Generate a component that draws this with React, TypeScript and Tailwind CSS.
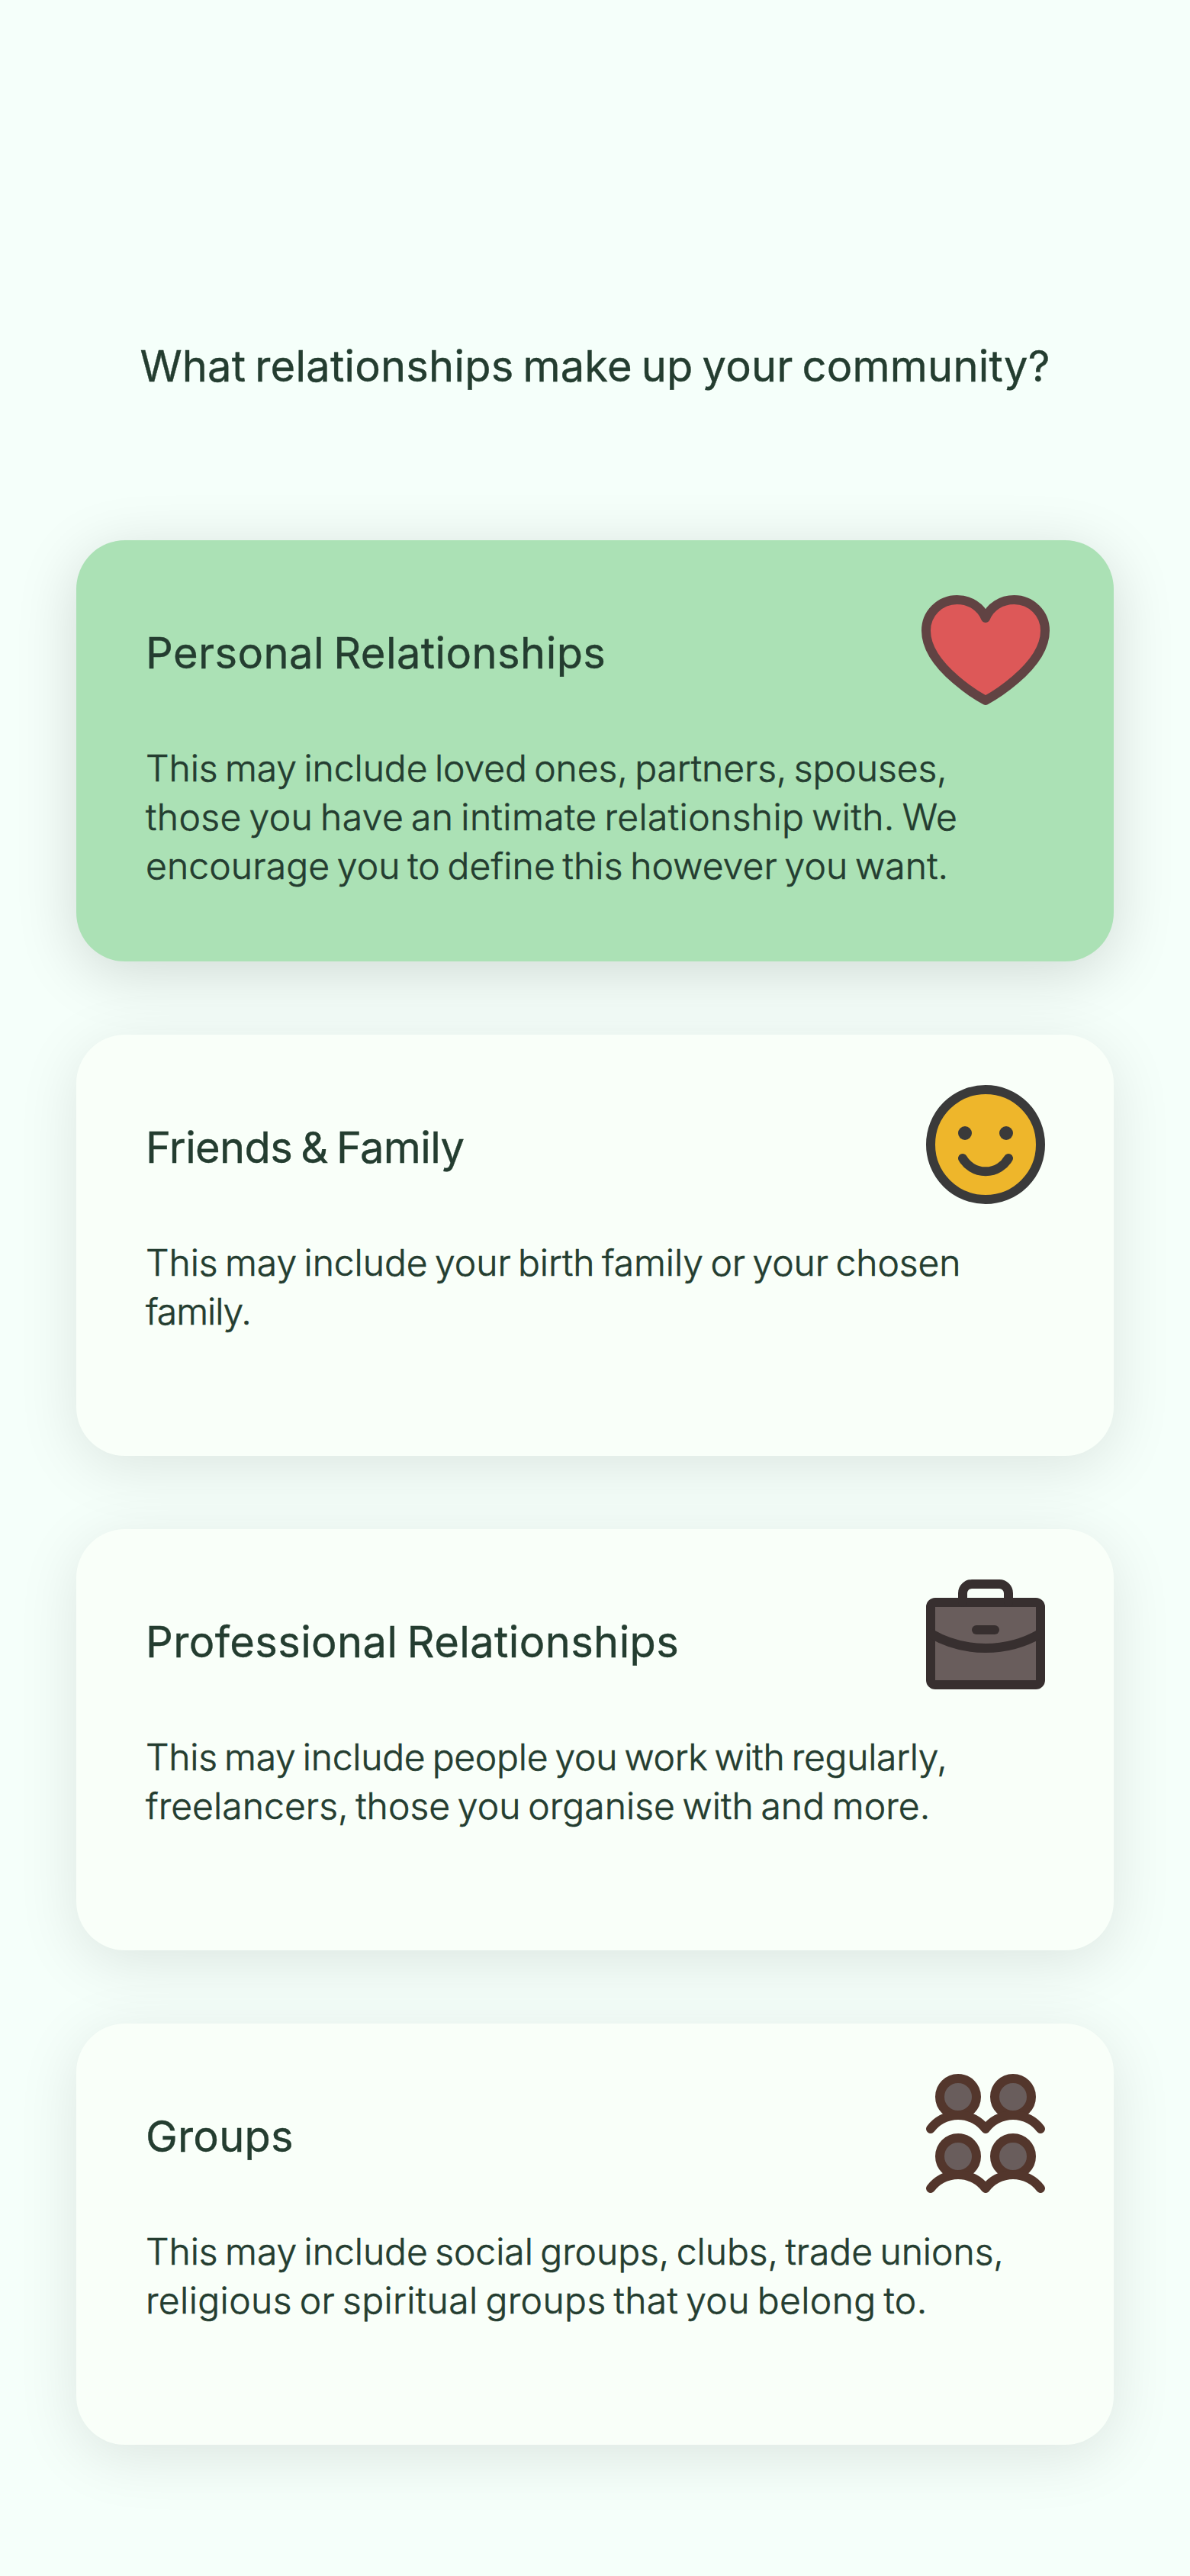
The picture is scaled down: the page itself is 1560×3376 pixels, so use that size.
import type { ReactNode } from "react";

type Line = { text: string; tracking: string };

type Card = {
  title: string;
  titleTracking: string;
  selected?: boolean;
  lines: Line[];
  icon: ReactNode;
};

function Icon({ className, children }: { className: string; children: ReactNode }) {
  return (
    <svg
      viewBox="0 0 256 256"
      className={`size-48 shrink-0 ${className}`}
      strokeWidth={16}
      strokeLinecap="round"
      strokeLinejoin="round"
    >
      {children}
    </svg>
  );
}

const HeartIcon = () => (
  <Icon className="fill-[#DD5858] stroke-[#614343]">
    <path d="M128,216S24,160,24,94A54,54,0,0,1,78,40c22.59,0,41.94,12.31,50,32,8.06-19.69,27.41-32,50-32a54,54,0,0,1,54,54C232,160,128,216,128,216Z" />
  </Icon>
);

const SmileyIcon = () => (
  <Icon className="fill-[#EEB62B] stroke-[#3A3A3A]">
    <circle cx="128" cy="128" r="96" />
    <path d="M168,152a46.19,46.19,0,0,1-80,0" fill="none" />
    <circle cx="92" cy="108" r="12" className="fill-[#3A3A3A]" stroke="none" />
    <circle cx="164" cy="108" r="12" className="fill-[#3A3A3A]" stroke="none" />
  </Icon>
);

const BriefcaseIcon = () => (
  <Icon className="fill-[#695D5C] stroke-[#372F2F]">
    <rect x="32" y="64" width="192" height="144" rx="8" />
    <path d="M168,64V48a16,16,0,0,0-16-16H104A16,16,0,0,0,88,48V64" fill="none" />
    <path d="M224,118.31A191.09,191.09,0,0,1,128,144a191.14,191.14,0,0,1-96-25.68" fill="none" />
    <path d="M112,112H144" />
  </Icon>
);

const GroupsIcon = () => (
  <Icon className="fill-[#695D5C] stroke-[#53362C]">
    <circle cx="80" cy="64" r="32" />
    <circle cx="176" cy="64" r="32" />
    <path d="M32,120a60,60,0,0,1,96,0a60,60,0,0,1,96,0" fill="none" />
    <circle cx="80" cy="168" r="32" />
    <circle cx="176" cy="168" r="32" />
    <path d="M32,224a60,60,0,0,1,96,0a60,60,0,0,1,96,0" fill="none" />
  </Icon>
);

const cards: Card[] = [
  {
    title: "Personal Relationships",
    titleTracking: "tracking-[0.44px]",
    selected: true,
    lines: [
      { text: "This may include loved ones, partners, spouses,", tracking: "tracking-[-0.06px]" },
      { text: "those you have an intimate relationship with. We", tracking: "tracking-[0.4px]" },
      { text: "encourage you to define this however you want.", tracking: "tracking-[0.13px]" },
    ],
    icon: <HeartIcon />,
  },
  {
    title: "Friends & Family",
    titleTracking: "tracking-[-0.62px]",
    lines: [
      { text: "This may include your birth family or your chosen", tracking: "tracking-[-0.05px]" },
      { text: "family.", tracking: "tracking-[-1px]" },
    ],
    icon: <SmileyIcon />,
  },
  {
    title: "Professional Relationships",
    titleTracking: "tracking-[0.4px]",
    lines: [
      { text: "This may include people you work with regularly,", tracking: "tracking-[-0.25px]" },
      { text: "freelancers, those you organise with and more.", tracking: "tracking-[0.08px]" },
    ],
    icon: <BriefcaseIcon />,
  },
  {
    title: "Groups",
    titleTracking: "tracking-[0.22px]",
    lines: [
      { text: "This may include social groups, clubs, trade unions,", tracking: "tracking-[-0.04px]" },
      { text: "religious or spiritual groups that you belong to.", tracking: "tracking-[0.39px]" },
    ],
    icon: <GroupsIcon />,
  },
];

function RelationshipCard({ title, titleTracking, selected, lines, icon }: Card) {
  const tone = selected
    ? "bg-[#ABE1B5] shadow-[0_16px_80px_rgba(0,0,0,0.15)]"
    : "bg-[#F9FFF9] shadow-[0_16px_80px_rgba(0,0,0,0.1)]";
  return (
    <article className={`h-[552px] rounded-[64px] pt-12 pr-[72px] pl-[91px] ${tone}`}>
      <div className="flex items-start justify-between">
        <h2 className={`pt-[68px] text-[56px] leading-[64px] font-normal whitespace-nowrap ${titleTracking}`}>
          {title}
        </h2>
        {icon}
      </div>
      <p className="mt-[27px] text-[48px] leading-[64px] font-light whitespace-nowrap [-webkit-text-stroke:0.6px_#243D30]">
        {lines.map((line) => (
          <span key={line.text} className={`block ${line.tracking}`}>
            {line.text}
          </span>
        ))}
      </p>
    </article>
  );
}

export default function App() {
  return (
    <main className="flex h-[3376px] w-[1560px] flex-col overflow-hidden bg-[#F5FFFA] px-[100px] pt-[448px] font-['Inter',sans-serif] text-[#243D30] [-webkit-text-stroke:0.4px_#243D30] [word-spacing:-4px]">
      <h1 className="text-center text-[56px] leading-[64px] font-normal tracking-[0.21px] whitespace-nowrap">
        What relationships make up your community?
      </h1>
      <div className="mt-[196px] flex flex-col gap-24">
        {cards.map((card) => (
          <RelationshipCard key={card.title} {...card} />
        ))}
      </div>
    </main>
  );
}
